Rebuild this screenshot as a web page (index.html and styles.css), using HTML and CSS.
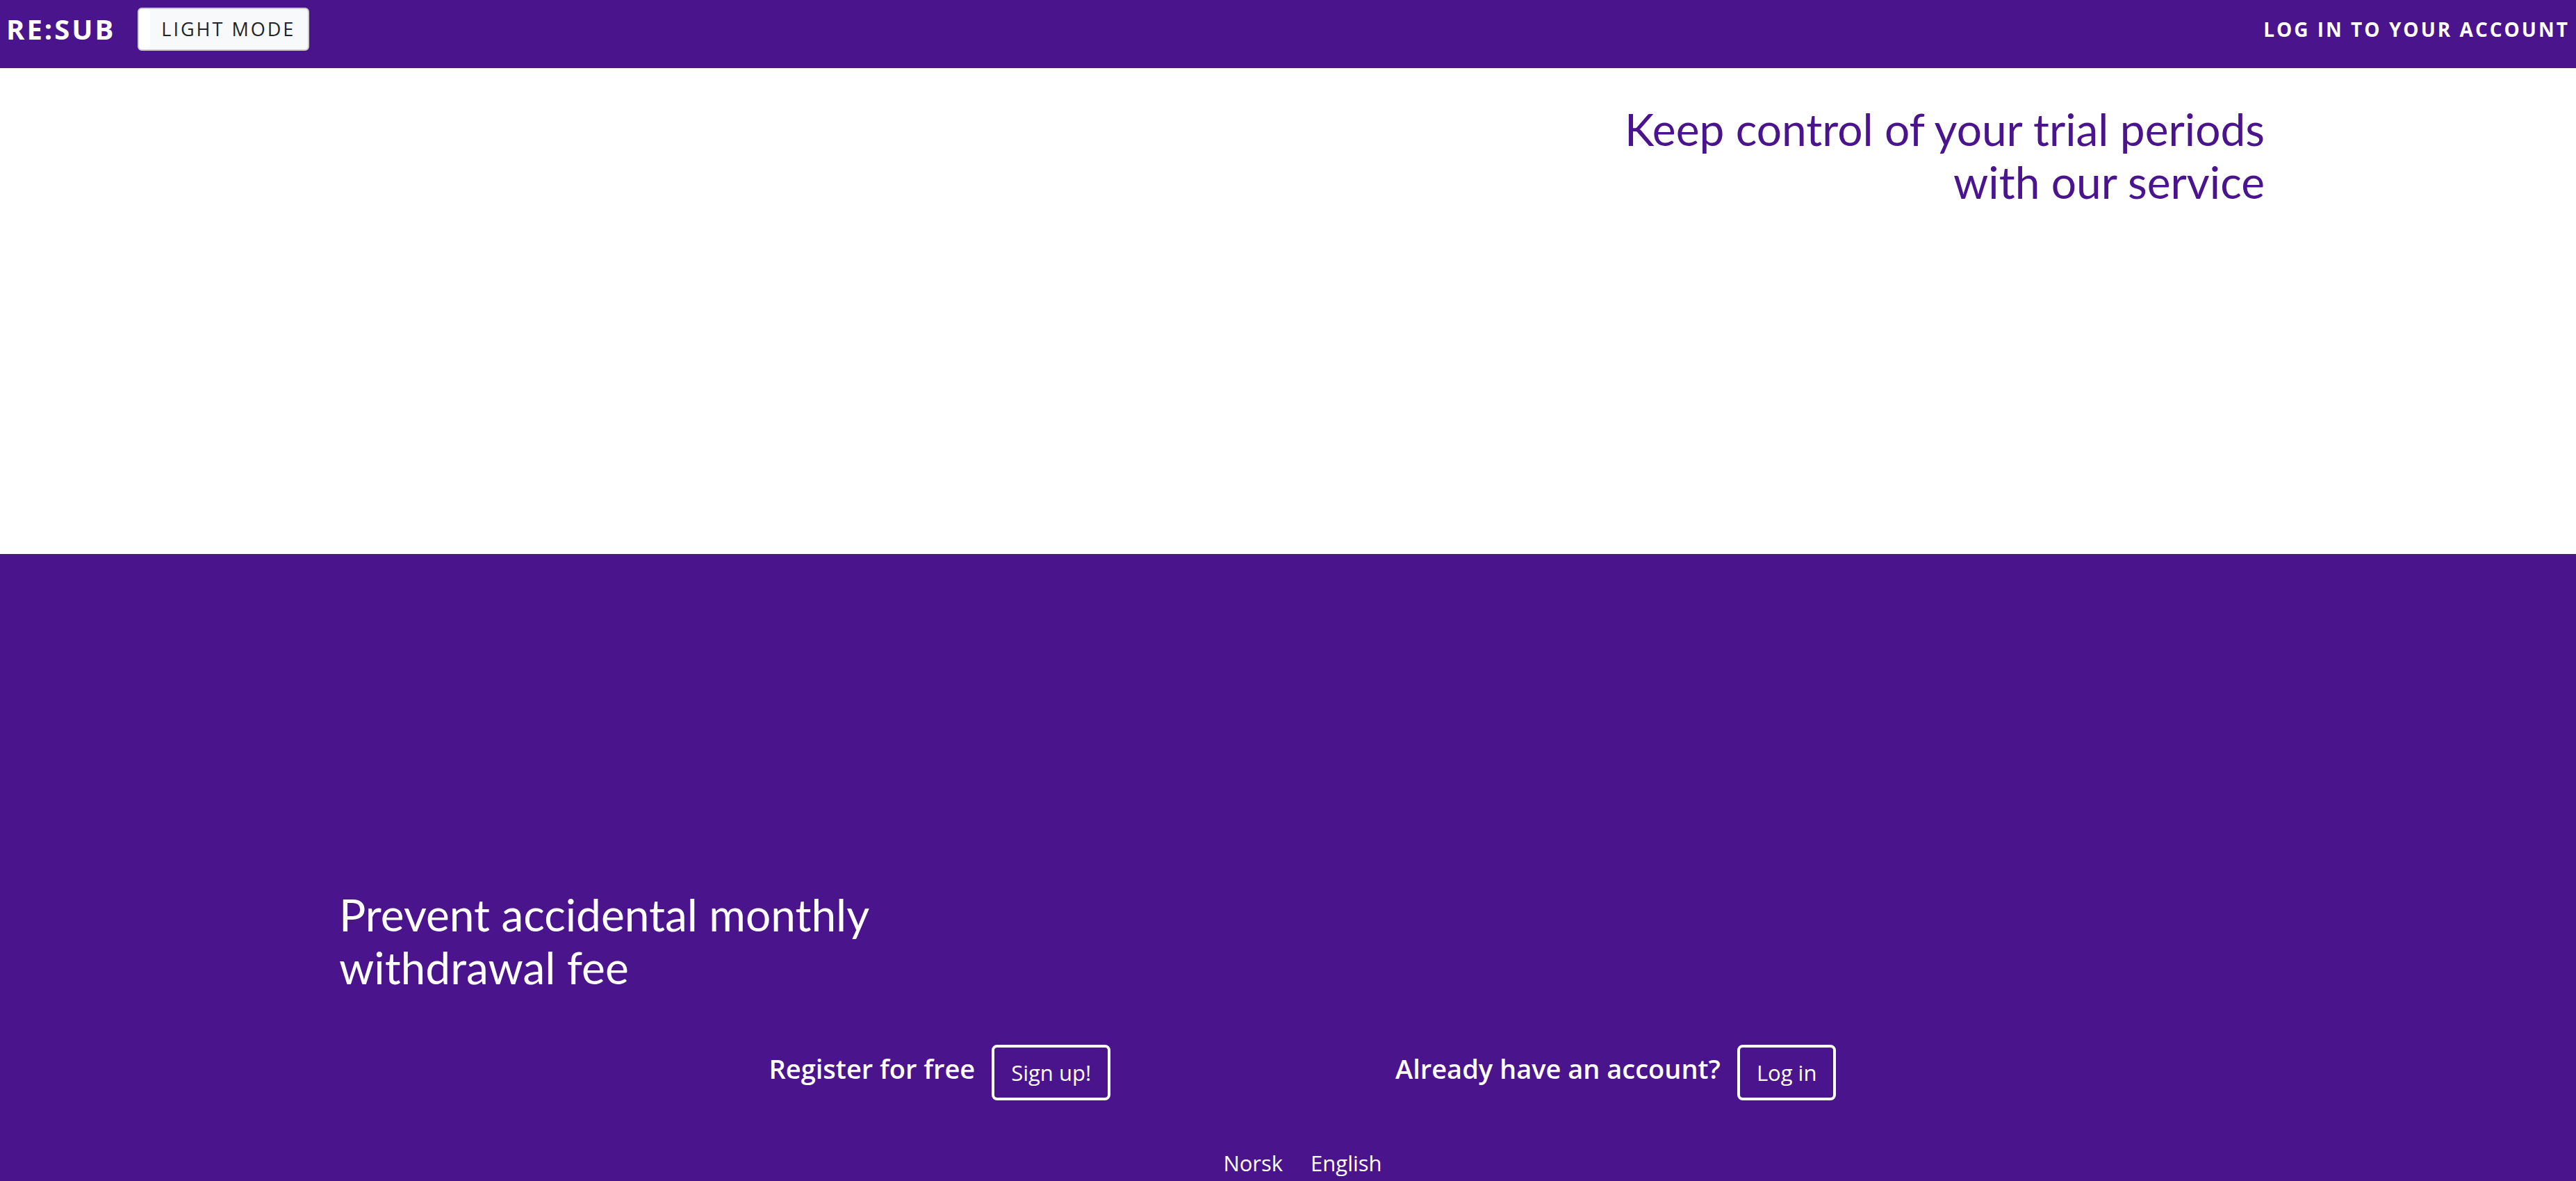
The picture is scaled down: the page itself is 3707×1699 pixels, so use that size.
FILE: index.html
```html
<!DOCTYPE html>
<html lang="en">
<head>
<meta charset="utf-8">
<meta name="viewport" content="width=device-width, initial-scale=1">
<title>RE:SUB</title>
<link rel="stylesheet" href="styles.css">
</head>
<body>
<header class="navbar">
  <a class="brand" href="#">RE:SUB</a>
  <button class="mode-toggle" type="button"><span class="mode-handle"></span><span class="mode-label">LIGHT MODE</span></button>
  <a class="account-link" href="#login">LOG IN TO YOUR ACCOUNT</a>
</header>
<main class="main">
  <section class="panel panel-light">
    <h1 class="headline">Keep control of your trial periods<br>with our service</h1>
  </section>
  <section class="panel panel-dark">
    <h2 class="headline">Prevent accidental monthly<br>withdrawal fee</h2>
  </section>
</main>
<footer class="footer">
  <div class="actions">
    <div class="action">
      <h3 class="action-title">Register for free</h3>
      <button class="btn" type="button">Sign up!</button>
    </div>
    <div class="action">
      <h3 class="action-title">Already have an account?</h3>
      <button class="btn" type="button" id="login">Log in</button>
    </div>
  </div>
  <nav class="languages" aria-label="Language">
    <a href="#no">Norsk</a>
    <a href="#en">English</a>
  </nav>
</footer>
</body>
</html>
```
FILE: styles.css
```css
* {
  box-sizing: border-box;
}

body {
  margin: 0;
  min-height: 100vh;
  display: flex;
  flex-direction: column;
  background: #4a148c;
  color: #fff;
  font-family: "Segoe UI", "Open Sans", sans-serif;
  font-size: 31px;
  line-height: 48px;
}

a {
  color: inherit;
  text-decoration: none;
}

h1, h2, h3 {
  margin: 0;
}

.navbar {
  display: flex;
  align-items: center;
  padding: 11px 9px 25px;
}

.brand {
  margin-right: 32px;
  font-size: 40px;
  font-weight: 700;
  letter-spacing: 3px;
}

.mode-toggle {
  display: flex;
  height: 62px;
  padding: 0;
  overflow: hidden;
  border: 2px solid #ccc;
  border-radius: 6px;
  background: #f8f9fa;
  color: #212529;
  font: inherit;
  font-size: 27px;
  line-height: 58px;
  letter-spacing: 3px;
}

.mode-handle {
  width: 16px;
  border-radius: 6px;
  background: #fff;
}

.mode-label {
  padding: 0 18px 0 16px;
}

.account-link {
  margin-left: auto;
  font-size: 28px;
  font-weight: 700;
  letter-spacing: 3px;
}

.headline {
  font-family: Lato, sans-serif;
  font-size: 64px;
  font-weight: 400;
  line-height: 76px;
}

.main {
  flex: 1;
  display: flex;
  flex-direction: column;
}

.panel-light {
  min-height: 699px;
  padding: 50px 448px 48px 48px;
  background: #fff;
  color: #4a148c;
  text-align: right;
}

.panel-dark {
  flex: 1;
  display: flex;
  align-items: flex-end;
  padding: 48px 48px 73px 488px;
}

.footer {
  padding: 0 0 2px 42px;
}

.actions {
  display: flex;
  justify-content: center;
  gap: 410px;
}

.action {
  display: flex;
  align-items: flex-start;
  gap: 24px;
}

.action-title {
  padding-top: 10px;
  font-size: 38px;
  font-weight: 600;
}

.btn {
  height: 80px;
  padding: 0 24px;
  border: 4px solid #fff;
  border-radius: 8px;
  background: transparent;
  color: inherit;
  font: inherit;
}

.languages {
  display: flex;
  justify-content: center;
  gap: 40px;
  padding-top: 66px;
}
```
